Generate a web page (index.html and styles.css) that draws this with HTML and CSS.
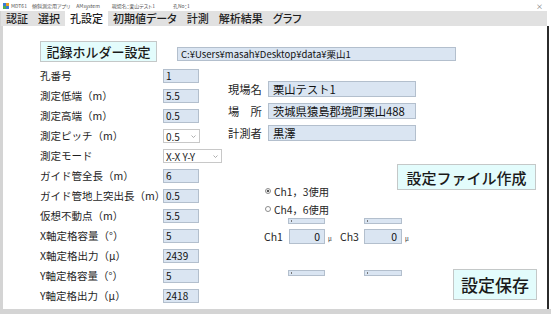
FILE: index.html
```html
<!DOCTYPE html>
<html lang="ja">
<head>
<meta charset="utf-8">
<title>MDT61 孔設定</title>
<link rel="stylesheet" href="styles.css">
</head>
<body>
<div class="window">
  <div class="titlebar">
    <svg class="app-icon" viewBox="0 0 6 6" width="6" height="6">
      <rect x="0" y="0" width="3" height="3" fill="#3a7bd5"/>
      <rect x="3" y="0" width="3" height="3" fill="#e8a020"/>
      <rect x="0" y="3" width="3" height="3" fill="#4caf50"/>
      <rect x="3" y="3" width="3" height="3" fill="#3a7bd5"/>
    </svg>
    <span class="t-app">MDT61</span>
    <span class="t-desc">傾斜測定用アプリ</span>
    <span class="t-sys">AMsystem</span>
    <span class="t-site">現場名：栗山テスト1</span>
    <span class="t-hole">孔No：1</span>
    <span class="close">×</span>
  </div>
  <div class="frame">
    <nav class="tabbar">
      <span class="tab">認証</span>
      <span class="tab">選択</span>
      <span class="tab active">孔設定</span>
      <span class="tab">初期値データ</span>
      <span class="tab">計測</span>
      <span class="tab">解析結果</span>
      <span class="tab">グラフ</span>
    </nav>
    <div class="content">
      <div class="toprow">
        <button class="btn btn-holder">記録ホルダー設定</button>
        <div class="field path">C:¥Users¥masah¥Desktop¥data¥栗山1</div>
      </div>
      <div class="main-area">
        <div class="form-left">
          <span class="lbl">孔番号</span><div class="field num">1</div>
          <span class="lbl">測定低端（m）</span><div class="field num">5.5</div>
          <span class="lbl">測定高端（m）</span><div class="field num">0.5</div>
          <span class="lbl">測定ピッチ（m）</span>
          <div class="combo combo-pitch"><span>0.5</span><svg class="arrow" viewBox="0 0 5 3" width="5" height="3"><polyline points="0.5,0.5 2.5,2.5 4.5,0.5" fill="none" stroke="#999" stroke-width="0.8"/></svg></div>
          <span class="lbl">測定モード</span>
          <div class="combo combo-mode"><span>X-X Y-Y</span><svg class="arrow" viewBox="0 0 5 3" width="5" height="3"><polyline points="0.5,0.5 2.5,2.5 4.5,0.5" fill="none" stroke="#999" stroke-width="0.8"/></svg></div>
          <span class="lbl">ガイド管全長（m）</span><div class="field num">6</div>
          <span class="lbl">ガイド管地上突出長（m）</span><div class="field num">0.5</div>
          <span class="lbl">仮想不動点（m）</span><div class="field num">5.5</div>
          <span class="lbl">X軸定格容量（°）</span><div class="field num">5</div>
          <span class="lbl">X軸定格出力（μ）</span><div class="field num">2439</div>
          <span class="lbl">Y軸定格容量（°）</span><div class="field num">5</div>
          <span class="lbl">Y軸定格出力（μ）</span><div class="field num">2418</div>
        </div>
        <div class="right">
          <div class="info">
            <span class="ilbl">現場名</span><div class="field ifield">栗山テスト1</div>
            <span class="ilbl">場　所</span><div class="field ifield">茨城県猿島郡境町栗山488</div>
            <span class="ilbl">計測者</span><div class="field ifield">黒澤</div>
          </div>
          <div class="lower-top">
            <div class="radios">
              <div class="radio-row"><span class="radio checked"></span>Ch1，3使用</div>
              <div class="radio-row"><span class="radio"></span>Ch4，6使用</div>
            </div>
            <button class="btn btn-create">設定ファイル作成</button>
          </div>
          <div class="ticks"><span class="tick"></span><span class="tick tick-2"></span></div>
          <div class="ch-row">
            <span class="ch-lbl">Ch1</span><div class="field ch-val">0</div><span class="mu">μ</span>
            <span class="ch-lbl ch-lbl-2">Ch3</span><div class="field ch-val ch-val-2">0</div><span class="mu">μ</span>
          </div>
          <div class="lower-bottom">
            <div class="ticks ticks-low"><span class="tick"></span><span class="tick tick-2"></span></div>
            <button class="btn btn-save">設定保存</button>
          </div>
        </div>
      </div>
    </div>
  </div>
  <div class="bottom"></div>
</div>
</body>
</html>
```

FILE: styles.css
```css
* { box-sizing: border-box; margin: 0; padding: 0; }
html, body { margin: 0; background: #fff; }
body {
  width: 551px; height: 314px; overflow: hidden;
  font-family: "Noto Sans CJK JP", "Noto Sans", sans-serif;
  color: #1e1e1e;
}
.window { width: 551px; height: 314px; display: flex; flex-direction: column; background: #fff; }

.titlebar {
  height: 15px; display: flex; align-items: center;
  font-size: 5px; color: #555; padding-left: 3px;
  font-feature-settings: "palt";
}
.app-icon { display: block; }
.t-app { margin-left: 2px; }
.t-desc { margin-left: 5px; }
.t-sys { margin-left: 6px; }
.t-site { margin-left: 12px; }
.t-hole { margin-left: 18px; }
.close { margin-left: auto; margin-right: 8px; font-size: 7px; color: #666; }

.frame { flex: 1; display: flex; flex-direction: column; border-left: 3px solid #d4d4d4; }
.tabbar {
  height: 15px; background: #e1e1e1; display: flex; align-items: stretch;
  margin-right: 4px; margin-left: -2px;
  font-size: 11px; font-weight: 500; font-feature-settings: "palt";
}
.tab { display: flex; align-items: center; padding: 0 5px; line-height: 1; }
.tab.active { background: #fff; }

.content {
  flex: 1; background: #fff;
  border-right: 2px solid #2b2b2b; margin-right: 2px;
  padding: 15px 0 0 37px;
}

.field {
  background: #dae5f2; border: 1px solid #b3bfcd;
  font-size: 10px; line-height: 12px; padding-left: 2px; color: #111;
  white-space: nowrap; overflow: hidden;
}
.btn {
  font-family: inherit; background: #e3fcfc; border: 1px solid #c4c8c8;
  color: #1a1a1a; font-weight: 500; display: flex; align-items: center; justify-content: center;
}

.toprow { display: flex; align-items: flex-start; }
.btn-holder { width: 117px; height: 21px; font-size: 13px; }
.path { margin-left: 20px; margin-top: 6px; width: 279px; height: 14px; padding-left: 3px; font-size: 9.5px; }

.main-area { display: flex; margin-top: 7px; }
.form-left {
  flex: 0 0 188px; display: grid; grid-template-columns: 123px auto;
  grid-auto-rows: 20px; align-items: start; justify-items: start;
}
.lbl { font-size: 10.5px; line-height: 14px; white-space: nowrap; }
.num { width: 36px; height: 14px; }
.combo {
  height: 14px; background: #fff; border: 1px solid #c8c8c8;
  display: flex; align-items: center; justify-content: space-between;
  font-size: 10px; padding: 0 3px 0 2px;
}
.combo-pitch { width: 37px; }
.combo-mode { width: 59px; }
.arrow { display: block; }

.right { flex: 1 1 auto; min-width: 0; }
.info {
  margin-top: 12px; display: grid; grid-template-columns: 40px 148px;
  grid-auto-rows: 16px; row-gap: 6px; align-items: center;
}
.ilbl { font-size: 11.3px; white-space: nowrap; }
.ifield { height: 16px; font-size: 11.3px; line-height: 14px; padding-left: 4px; }

.lower-top { display: flex; align-items: flex-start; justify-content: space-between; margin-top: 23px; }
.radios { margin-left: 37px; padding-top: 18px; }
.radio-row {
  height: 18px; display: flex; align-items: center; gap: 3px;
  font-size: 10.3px; white-space: nowrap;
}
.radio {
  width: 6px; height: 6px; border: 1px solid #8c8c8c; border-radius: 50%; background: #fff;
}
.radio.checked { background: radial-gradient(circle, #555 0 1.4px, #fff 1.6px); }
.btn-create { width: 139px; height: 26px; font-size: 15px; margin-right: 11px; }

.ticks { display: flex; margin-left: 60px; }
.tick {
  width: 37px; height: 6px; background: #dae5f2; border: 1px solid #b3bfcd; position: relative;
}
.tick::before {
  content: ""; position: absolute; left: 2px; top: 1px; width: 1px; height: 2px; background: #777;
}
.tick-2 { width: 38px; margin-left: 39px; }

.ch-row { display: flex; align-items: center; margin: 5px 0 0 36px; height: 15px; }
.ch-lbl { width: 25px; font-size: 10.5px; white-space: nowrap; }
.ch-lbl-2 { width: 24px; }
.ch-val { width: 36px; height: 15px; text-align: right; padding-right: 4px; font-size: 10.5px; line-height: 13px; }
.ch-val-2 { width: 38px; }
.mu { width: 15px; font-size: 6px; padding-left: 3px; align-self: flex-end; line-height: 10px; }

.lower-bottom { display: flex; align-items: flex-start; justify-content: space-between; margin-top: 25px; }
.ticks-low { margin-top: 1px; }
.btn-save { width: 84px; height: 31px; font-size: 17px; margin-right: 10px; }

.bottom { height: 6px; background: #d4d4d4; }
```
